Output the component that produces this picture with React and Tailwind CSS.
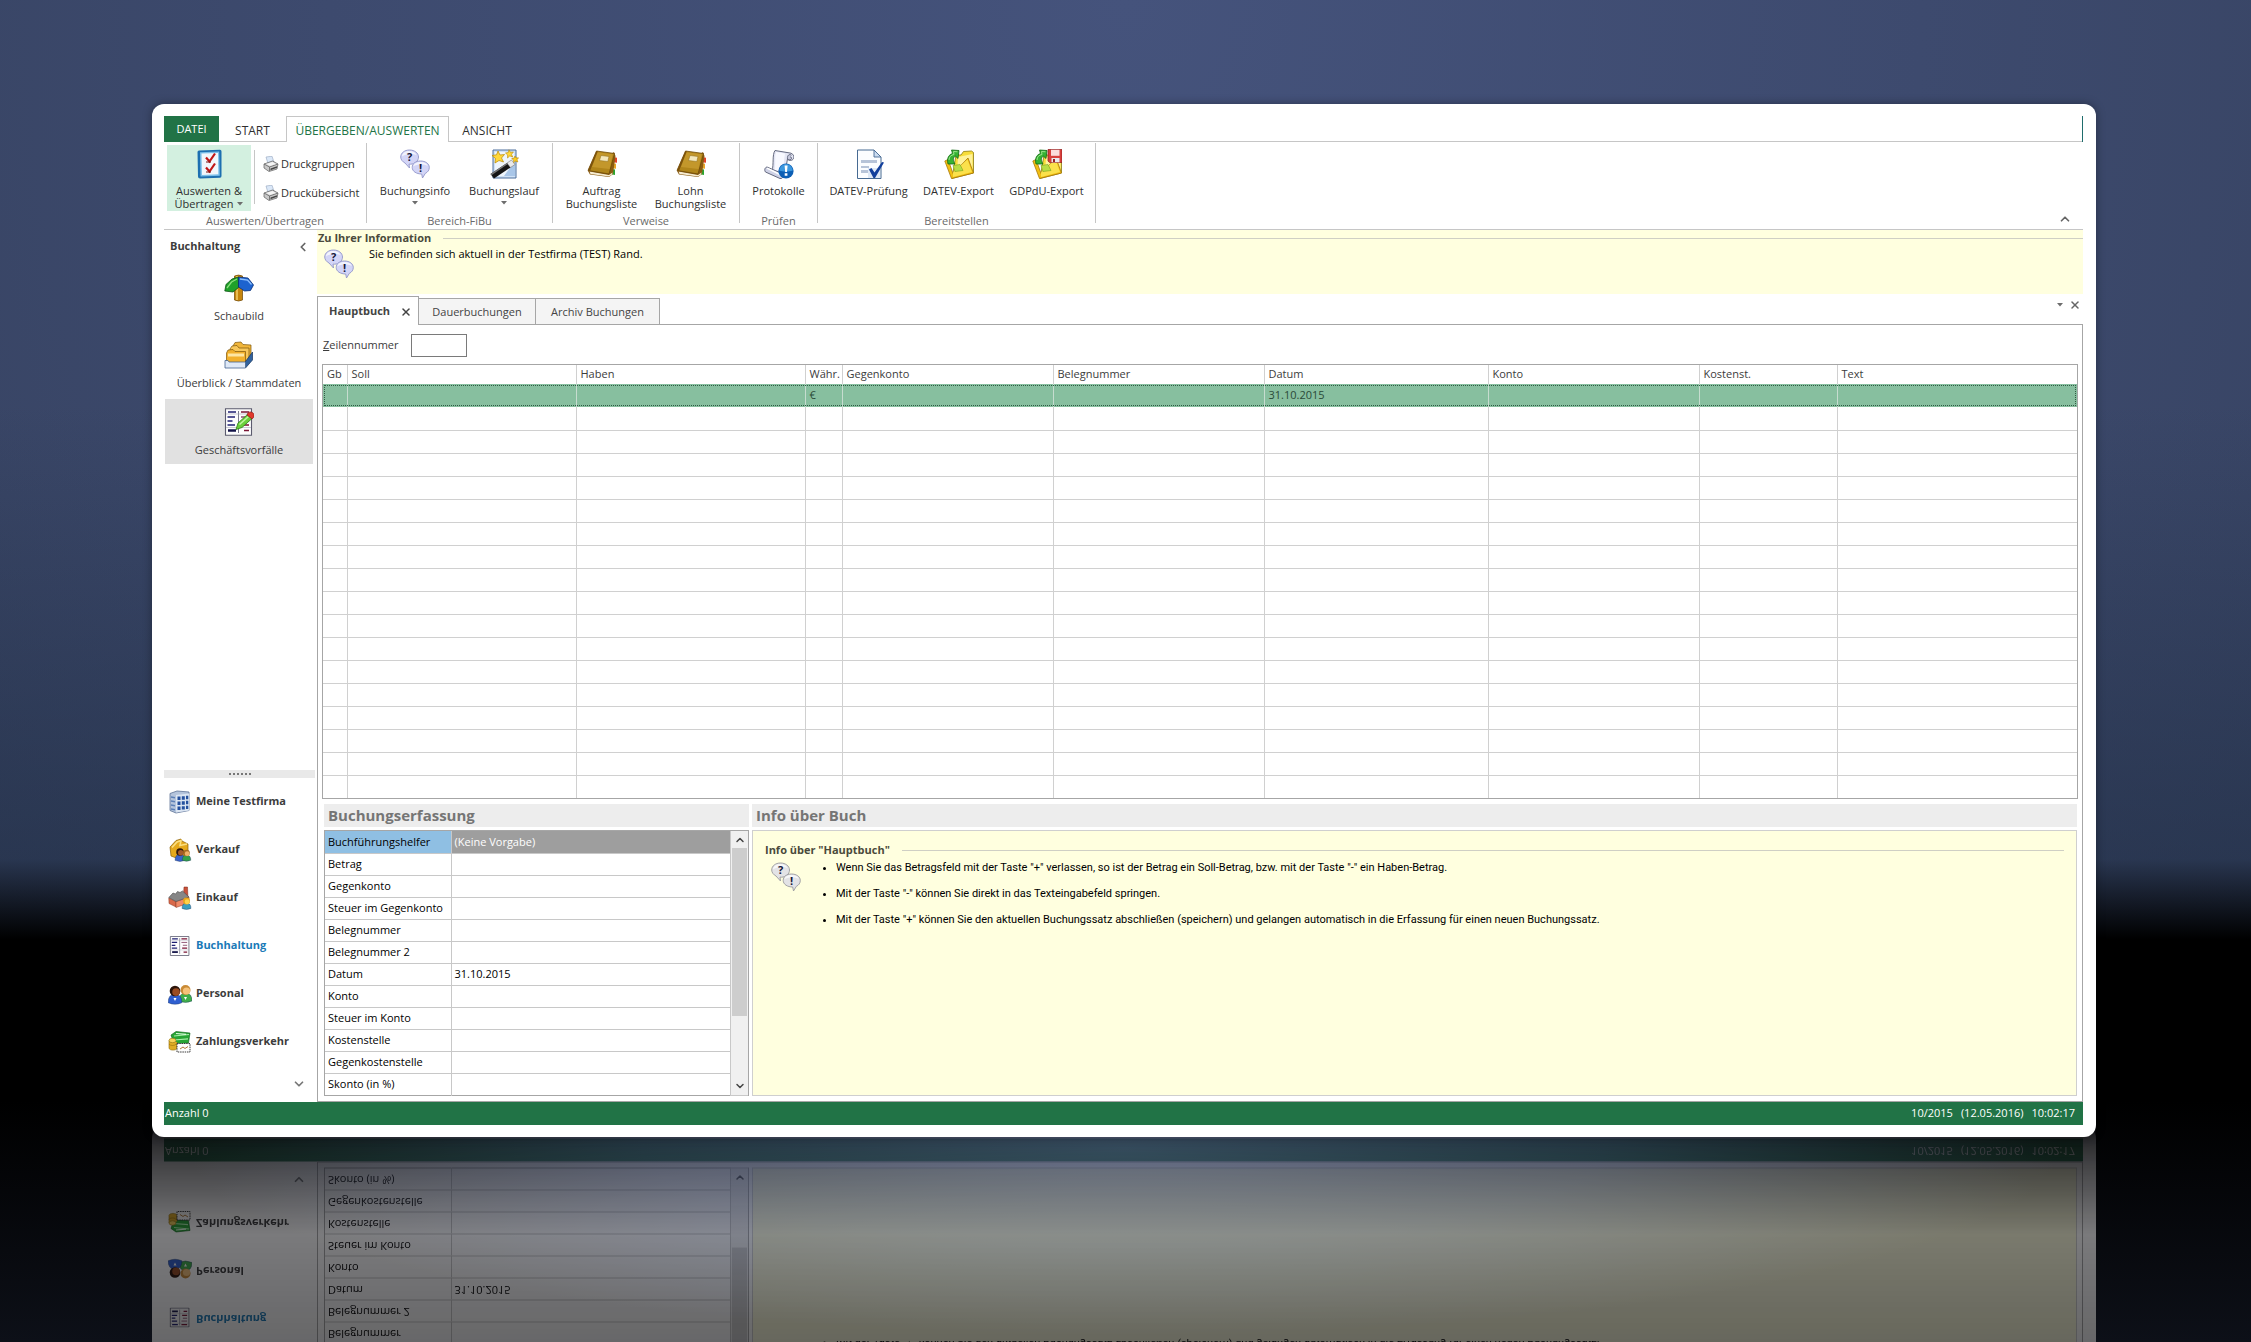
import { useId } from 'react';
import { ChevronDown, ChevronLeft, ChevronUp, X } from 'lucide-react';

/* ---------- Icons ---------- */

function ChecklistIcon() {
  return (
    <svg viewBox="0 0 30 30" className="size-[30px]" aria-hidden="true">
      <path d="M5 1.500 26 .8Q27.500 .8 27.500 2.500V27q0 1.500-1.500 1.700L6 29.500q-2 0-2-2L3.500 3Q3.500 1.500 5 1.500Z" fill="#1d6fb0" />
      <path d="M6 3.200 25.200 2.500 25.800 26.800 6.500 27.600Z" fill="#7cc0ea" />
      <path d="M7.500 4.600 24 4 24.300 25.300 8 26Z" fill="#f1f6fb" />
      <path d="M12 8.500l3.500 4L21 4.500M12 18.500l3.500 4L21 14.500" fill="none" stroke="#c01818" strokeWidth="2.200" />
      <path d="M12 13h5M12 23h5" stroke="#7d1414" strokeWidth="1" />
    </svg>
  );
}

function PrinterIcon() {
  return (
    <svg viewBox="0 0 16 16" className="size-4" aria-hidden="true">
      <path d="M3 1l6-.8 2 6-6 1.500Z" fill="#dbe8f8" stroke="#93a4bd" strokeWidth=".6" />
      <path d="M1 8 9.500 5l5.500 3-1 5-8 2.500L1 12Z" fill="#c9c9c9" stroke="#5d5d5d" strokeWidth=".7" />
      <path d="M1 8l5.500 3L15 8M6.500 11v4" fill="none" stroke="#666" strokeWidth=".8" />
      <path d="M7.500 12.500 14 10.200v1.500l-6.500 2.500Z" fill="#444" />
      <path d="M3 8 9.500 6l3.500 2-6 2Z" fill="#f5f5f5" />
    </svg>
  );
}

function InfoBubblesIcon({ gray }) {
  const fill = gray ? '#e3e3e6' : '#d3d5f7';
  const edge = gray ? '#9a9a9e' : '#9296c9';
  return (
    <svg viewBox="0 0 30 30" className="size-[30px]" aria-hidden="true">
      <path d="M9.500 1C14.500 1 18.500 4 18.500 8s-3.500 7-8 7.200L9 15.100 9.500 19 5 14C2.500 12.700.7 10.500.7 8 .7 4 4.500 1 9.500 1Z" fill={fill} stroke={edge} strokeWidth=".9" />
      <path d="M9.500 2C5.500 2 2 4 2 7.500 5 5 12 4 16.500 6 15.500 3.500 12.500 2 9.500 2Z" fill="#fff" opacity=".7" />
      <path d="M20.500 12c5 0 8.800 2.700 8.800 6.500 0 2.600-1.500 4.700-4 5.900L22.500 29l-.8-4c-5.300 0-9.500-2.700-9.500-6.500S15.500 12 20.500 12Z" fill={fill} stroke={edge} strokeWidth=".9" />
      <path d="M20.500 13c-4 0-7 1.600-7.200 4.500 4-2.500 10-2.500 14.500-.5C27 14.500 24 13 20.500 13Z" fill="#fff" opacity=".7" />
      <text x="9.500" y="12" textAnchor="middle" className="font-['Open_Sans',sans-serif] text-[11px] font-bold" fill="#17173a">?</text>
      <text x="20.500" y="23" textAnchor="middle" className="font-['Open_Sans',sans-serif] text-[11px] font-bold" fill="#17173a">!</text>
    </svg>
  );
}

function WandIcon() {
  return (
    <svg viewBox="0 0 30 30" className="size-[30px]" aria-hidden="true">
      <path d="M4 1h23v28H4Z" fill="#cfe1f5" stroke="#4d6e9c" />
      <path d="M6 3h19v24H6Z" fill="#eef5fc" />
      <path d="M15 27h11V12Z" fill="#a9c6e8" />
      <path d="M1.500 25 18 14l3.500 4.500L5 29.500Z" fill="#151515" />
      <path d="M18 14l4.500-3 3.500 4.500-4.500 3Z" fill="#e9e9e9" stroke="#666" strokeWidth=".5" />
      <path d="M1.500 25 18 14l.8 1L2.500 26.300Z" fill="#777" />
      <path d="M9 2l2 4 4.500-.5L12.500 9l2 4-4.500-1.500L6 14l.5-4.500L3 6.500l4.500-.7Z" fill="#ffd83a" stroke="#b98700" strokeWidth=".7" />
      <path d="M20 .8l1.400 2.500 3-.3-1.900 2.300 1.200 2.700-2.900-1.100L18.500 9l.2-3L16.500 4l2.800-.5Z" fill="#ffd83a" stroke="#b98700" strokeWidth=".6" />
      <path d="M26 7l1 2 2.500-.2-1.500 2 .9 2.200-2.400-.9-1.900 1.500.1-2.500-2-1.500 2.400-.5Z" fill="#ffcf20" stroke="#b98700" strokeWidth=".6" />
    </svg>
  );
}

function BookIcon() {
  return (
    <svg viewBox="0 0 30 30" className="size-[30px]" aria-hidden="true">
      <path d="M26 8l4 .8v5l-4-.5Z" fill="#e0442a" />
      <path d="M25 14l4 .8v5l-4-.5Z" fill="#e8a62a" />
      <path d="M24 20l4 .5V26l-4-.8Z" fill="#2ba52f" />
      <path d="M1 22 3 25.500 22 28l4-3L28.500 7 27 3Z" fill="#8a5c12" />
      <path d="M2.500 22.500 22 26l3.500-2.500-.4 2L22 27.500 3.500 25Z" fill="#f6ecd2" />
      <path d="M9.500 2 27.500 4.500 22 25 1 21.500Z" fill="#b0851a" stroke="#6e4a09" strokeWidth=".8" />
      <path d="M10.500 3.200 25.800 5.300 22.500 20 5 18Z" fill="#c89b30" opacity=".8" />
      <path d="M14 6.500l8 1-1.200 5-8.300-1Z" fill="#f3e7bd" stroke="#8a6a1a" strokeWidth=".5" />
      <path d="M1 21.500 9.500 2l1.300.2L3 22Z" fill="#7c520b" />
    </svg>
  );
}

function ScrollAlertIcon() {
  return (
    <svg viewBox="0 0 30 30" className="size-[30px]" aria-hidden="true">
      <path d="M11 1.500 26 4c3 .5 4.500 3 3.500 5.500s-5 2.500-6 .3L21 24 8 22.500C10 15 8 6 11 1.500Z" fill="#e4e6f4" stroke="#555a72" strokeWidth=".9" />
      <path d="M12 3l9 1.500c-1 5-1 12-2.500 17L10.500 21C12 14 10.500 8 12 3Z" fill="#f8f9ff" />
      <path d="M27.500 6.200c-2-1.500-4.500 0-4 3.500.8 1.500 3.500 1.500 4 0 .4-1-.5-2-1.500-1.700" fill="#c6c8dc" stroke="#555a72" strokeWidth=".9" />
      <path d="M3 18c-2 .3-3 3-1.500 5L16 29.500c3 .5 4-3 2-5Z" fill="#cfd2e6" stroke="#555a72" strokeWidth=".9" />
      <path d="M3 19.200 16 25.500" stroke="#fff" strokeWidth="1.500" />
      <circle cx="22" cy="22" r="7.600" fill="#0d5fb5" />
      <path d="M22 15a7 7 0 0 1 6.800 6.500c-4 1.500-9.600 1.500-13.600 0A7 7 0 0 1 22 15Z" fill="#3b97de" />
      <path d="M20.600 16.500h3l-.6 6.500h-1.800ZM20.700 24.300h2.700v2.500h-2.700Z" fill="#fff" />
    </svg>
  );
}

function DocCheckIcon() {
  return (
    <svg viewBox="0 0 30 30" className="size-[30px]" aria-hidden="true">
      <path d="M3.500 1H20l7 7v21.500H3.500Z" fill="#fbfdff" stroke="#476a92" />
      <path d="M20 1v7h7Z" fill="#cbdcf0" stroke="#476a92" strokeWidth=".9" />
      <path d="M7 11h16v3H7ZM7 17h8v2H7ZM7 21h7v3H7Z" fill="#b7c4d8" />
      <path d="M14 19h12v10H14Z" fill="#dfe9f6" />
      <path d="M15 20.500l2.500-1.500 3 4.500L28 13l2 .5L21 29h-1.500Z" fill="#123f9c" />
    </svg>
  );
}

function FolderExportIcon({ disk }) {
  return (
    <svg viewBox="0 0 30 30" className="size-[30px]" aria-hidden="true">
      <path d="M12 6h5l2.500-3.500 8-.5 2 1.500V24L8 29.500Z" fill="#f7dc3a" stroke="#8a7a12" strokeWidth=".8" />
      <path d="M14 8 28.500 5V22L13 26Z" fill="#fff29a" />
      <path d="M.8 12 4 10.500l5 14L24 9l5.500 15L7.500 29.500Z" fill="#f3bf12" stroke="#a8780a" strokeWidth=".8" />
      <path d="M9 23.500 23.500 10.500 28 23 9 28Z" fill="#fbe14c" />
      <path d="M9 16.500l7-1 3 6-8 1Z" fill="#b9dd45" stroke="#7aa51c" strokeWidth=".6" />
      <path d="M4 15C2.500 9 5 5.500 8.500 4.500L7.500 1 15 1.500l-1 8-2.500-2.300C8.500 8.500 9 11.500 11 15Z" fill="#35b232" stroke="#126912" strokeWidth=".8" />
      <path d="M5 11c0-3 2-5 5-5.500L9.500 2.500l4 .3" fill="none" stroke="#9be58a" strokeWidth="1" />
      {disk && (
        <g>
          <path d="M16 .5h14v13H17.500L16 12Z" fill="#d8403c" stroke="#8d1b1b" strokeWidth=".7" />
          <path d="M19 .8h8.500v6H19Z" fill="#fbdcda" />
          <path d="M19.500 9h8v4.300h-8Z" fill="#e9e9ee" />
          <path d="M21 10h2v3h-2Z" fill="#922" />
        </g>
      )}
    </svg>
  );
}

function SignpostIcon() {
  return (
    <svg viewBox="0 0 30 28" className="h-[28px] w-[30px]" aria-hidden="true">
      <path d="M10.500 2q4-1.800 8 0v24q-4 2-8 0Z" fill="#c5850e" stroke="#6e4605" strokeWidth=".7" />
      <path d="M13 2v24" stroke="#f3cf6a" strokeWidth="1.500" />
      <path d="M14.500 3v10.500L9 18 .8 17 2 10.500 8 5Z" fill="#1fa12a" stroke="#0b5411" strokeWidth=".8" />
      <path d="M13 5 7.500 8 3 14" fill="none" stroke="#8be07d" strokeWidth="1.300" />
      <path d="M14.500 3 24 4l5.500 7-3 5.500-6 .5-6-4Z" fill="#1d63cf" stroke="#0a2e75" strokeWidth=".8" />
      <path d="M16 5l7.500 1 4 4.500" fill="none" stroke="#8fc1ff" strokeWidth="1.300" />
    </svg>
  );
}

function FolderBoxIcon() {
  return (
    <svg viewBox="0 0 30 28" className="h-[28px] w-[30px]" aria-hidden="true">
      <path d="M9 5l2-3.500 6-.5 2 2.500 8 .5v15H9Z" fill="#f0b53a" stroke="#7d5408" strokeWidth=".7" />
      <path d="M6 8l2-3 5-.5 2 2.500h10v13H6Z" fill="#f7c75a" stroke="#7d5408" strokeWidth=".7" />
      <path d="M2.500 12l1.500-3 5-.5 2 2h10.500v11h-19Z" fill="#f2b02c" stroke="#7d5408" strokeWidth=".7" />
      <path d="M4 12.500h16v3H4Z" fill="#fde6a4" />
      <path d="M21.500 20.500 28.500 11v8l-7 8Z" fill="#31629e" stroke="#16345d" strokeWidth=".7" />
      <path d="M1 19.500h3l1 1.500h16.500v6H1Z" fill="#dfe9f7" stroke="#44638f" strokeWidth=".8" />
    </svg>
  );
}

function LedgerIcon({ pencil, className }) {
  return (
    <svg viewBox="0 0 30 28" className={className} aria-hidden="true">
      <path d="M1.500.7h26v26.600h-26Z" fill="#fdfdfd" stroke="#5b5b6e" strokeWidth="1.100" />
      <path d="M14.500 3v22" stroke="#7b7b8c" />
      <path d="M4 4h8M3.500 9h7.500M3.500 13h5M3.500 17h7.500" stroke="#1f1f72" strokeWidth="1.700" />
      <path d="M17 4h8M18 17h7M20 22.500h5" stroke="#7b1535" strokeWidth="1.700" />
      <path d="M17 9h8M19 13h6" stroke="#8d5070" strokeWidth="1.300" />
      <path d="M4 22.500h8" stroke="#131348" strokeWidth="2.500" />
      <path d="M2 6h25M2 19.500h25" stroke="#a9a9b8" strokeWidth=".6" />
      {pencil && (
        <g>
          <path d="M12 21.500 14 15 23.500 6.500l4.500 4L18 19.500Z" fill="#6bd13c" stroke="#2e7d14" strokeWidth=".8" />
          <path d="M15.500 16.500 24.500 8.500" stroke="#c4f5a2" strokeWidth="1.500" />
          <path d="M23 7c.5-3 4-4 6-2s1 4.500-1 6Z" fill="#e0392c" stroke="#8d1712" strokeWidth=".7" />
        </g>
      )}
    </svg>
  );
}

function BuildingIcon() {
  return (
    <svg viewBox="0 0 24 24" className="size-6" aria-hidden="true">
      <path d="M2 3.500 9 1l12 1v18.500L8 23 2 20.500Z" fill="#b4c4dc" stroke="#5d7296" strokeWidth=".8" />
      <path d="M8 5l13-1.500v17L8 22.500Z" fill="#dbe5f2" />
      <path d="M9.500 6.500h3v3.500h-3ZM13.800 6.200h3v3.500h-3ZM18 5.800h2.300v3.500H18ZM9.500 11.500h3V15h-3ZM13.800 11.200h3v3.500h-3ZM18 10.800h2.300v3.500H18ZM9.500 16.500h3V20h-3ZM13.800 16.200h3v3.300h-3ZM18 15.800h2.300V19H18Z" fill="#24509e" />
      <path d="M3 7l4 .7M3 11l4 .7M3 15l4 .7M3 19l4 .7" stroke="#5c80b7" strokeWidth="1.400" />
    </svg>
  );
}

/* Head and shoulders, shared by several of the module icons */
function Person({ x, y, hair, skin, shirt, r }) {
  return (
    <g>
      <path d={`M${x - r * 1.3} ${y + r * 2.2}q0-${r * 1.6} ${r * 1.3}-${r * 1.6}t${r * 1.3} ${r * 1.6}q-${r * 1.3} ${r * 0.6}-${r * 2.6} 0Z`} fill={shirt} stroke="#1c3560" strokeWidth=".4" />
      <circle cx={x} cy={y} r={r} fill={hair} />
      <circle cx={x + r * 0.2} cy={y + r * 0.2} r={r * 0.72} fill={skin} />
    </g>
  );
}

function SalesIcon() {
  return (
    <svg viewBox="0 0 24 24" className="size-6" aria-hidden="true">
      <path d="M2 9 8 2.500 13 1l1 2 6 3v12l-9 3-8-3Z" fill="#e5a91d" stroke="#8a5f06" strokeWidth=".7" />
      <path d="M4 9.500 9 4l4-1.500-1 5 7-1.500" fill="none" stroke="#fbdf82" strokeWidth="1.600" />
      <Person x={12} y={14} r={3.800} hair="#30180c" skin="#a55a2a" shirt="#3a63c9" />
      <Person x={18.500} y={15} r={3.300} hair="#a86a20" skin="#f0b267" shirt="#35a04a" />
    </svg>
  );
}

function PurchaseIcon() {
  return (
    <svg viewBox="0 0 24 24" className="size-6" aria-hidden="true">
      <path d="M15.500 9 16 1h3.500l.5 12Z" fill="#c9523a" stroke="#7c2716" strokeWidth=".5" />
      <path d="M.8 12 8 15.500V21L1 17.500Z" fill="#d8694a" stroke="#8a3420" strokeWidth=".5" />
      <path d="M8 15.500 21 11v6L8 21.500Z" fill="#f08a68" stroke="#8a3420" strokeWidth=".5" />
      <path d="M.8 11.500 5 7l2.500 1 2-2.500 2.500 1L14.500 5 21 11 8 15.500Z" fill="#868686" stroke="#4c4c4c" strokeWidth=".6" />
      <Person x={18.500} y={15} r={3.400} hair="#e8a51a" skin="#ffd34a" shirt="#3b9fc0" />
    </svg>
  );
}

function StaffIcon() {
  return (
    <svg viewBox="0 0 24 24" className="size-6" aria-hidden="true">
      <Person x={17.500} y={8} r={5} hair="#c98a35" skin="#f6c27a" shirt="#3fae4a" />
      <Person x={7} y={9} r={5.300} hair="#2c150a" skin="#9a4c22" shirt="#2f5fd0" />
      <path d="M5.500 16l1.500 3L8.500 16ZM16 15l1.500 3 1.500-3Z" fill="#fff" />
    </svg>
  );
}

function PaymentIcon() {
  return (
    <svg viewBox="0 0 24 24" className="size-6" aria-hidden="true">
      <path d="M3 5 8 1.500 22 3l-1.500 10L6 14Z" fill="#27a534" stroke="#0c5c15" strokeWidth=".6" />
      <path d="M6 6l15-1.500M6 10l14-1.200" stroke="#a8efaa" strokeWidth="1.200" />
      <path d="M8 3.500l10 .8" stroke="#dffbe0" strokeWidth="1.200" />
      <path d="M1 10.500v7.500c0 2.800 8 2.800 8 0v-6" fill="#e0ac25" stroke="#94700b" strokeWidth=".6" />
      <ellipse cx="4.500" cy="10.500" rx="3.500" ry="2.200" fill="#f7d35a" stroke="#94700b" strokeWidth=".6" />
      <path d="M1 14c1 2 6 2 7 0" fill="none" stroke="#94700b" strokeWidth=".6" />
      <path d="M9 13.500h13v8.500H9Z" fill="#fdfdfd" stroke="#3a3a3a" strokeDasharray="1.500 .8" />
      <path d="M12 19l3-2 2 1.500 3-2" fill="none" stroke="#b07a3a" />
    </svg>
  );
}

function Caret() {
  return (
    <svg viewBox="0 0 6 4" className="h-1 w-1.5" aria-hidden="true">
      <path d="M0 0h6L3 3.500Z" fill="#6d6d6d" />
    </svg>
  );
}

/* ---------- Data ---------- */

const columns = [
  { name: 'Gb', width: 'w-[24px]' },
  { name: 'Soll', width: 'w-[229px]' },
  { name: 'Haben', width: 'w-[229px]' },
  { name: 'Währ.', width: 'w-[37px]' },
  { name: 'Gegenkonto', width: 'w-[211px]' },
  { name: 'Belegnummer', width: 'w-[211px]' },
  { name: 'Datum', width: 'w-[224px]' },
  { name: 'Konto', width: 'w-[211px]' },
  { name: 'Kostenst.', width: 'w-[138px]' },
  { name: 'Text', width: '' },
];

const firstRow = { 'Währ.': '€', Datum: '31.10.2015' };

const entryFields = [
  ['Buchführungshelfer', '(Keine Vorgabe)'],
  ['Betrag', ''],
  ['Gegenkonto', ''],
  ['Steuer im Gegenkonto', ''],
  ['Belegnummer', ''],
  ['Belegnummer 2', ''],
  ['Datum', '31.10.2015'],
  ['Konto', ''],
  ['Steuer im Konto', ''],
  ['Kostenstelle', ''],
  ['Gegenkostenstelle', ''],
  ['Skonto (in %)', ''],
];

const modules = [
  { name: 'Meine Testfirma', icon: <BuildingIcon /> },
  { name: 'Verkauf', icon: <SalesIcon /> },
  { name: 'Einkauf', icon: <PurchaseIcon /> },
  { name: 'Buchhaltung', icon: <LedgerIcon className="h-5 w-6" />, active: true },
  { name: 'Personal', icon: <StaffIcon /> },
  { name: 'Zahlungsverkehr', icon: <PaymentIcon /> },
];

const hints = [
  'Wenn Sie das Betragsfeld mit der Taste "+" verlassen, so ist der Betrag ein Soll-Betrag, bzw. mit der Taste "-" ein Haben-Betrag.',
  'Mit der Taste "-" können Sie direkt in das Texteingabefeld springen.',
  'Mit der Taste "+" können Sie den aktuellen Buchungssatz abschließen (speichern) und gelangen automatisch in die Erfassung für einen neuen Buchungssatz.',
];

/* ---------- Ribbon ---------- */

function RibbonGroup({ title, className, children }) {
  return (
    <div className={`flex h-20 flex-col border-r border-[#c6c6c6] ${className}`}>
      <div className="flex h-[70px] shrink-0 justify-center pt-0.5">{children}</div>
      <div className="text-center leading-4 text-[#6a6a6a]">{title}</div>
    </div>
  );
}

function RibbonButton({ icon, lines, caret, inlineCaret, className = 'w-[89px]' }) {
  return (
    <button className={`flex h-[66px] flex-col items-center pt-1 leading-[13px] ${className}`}>
      <span className="mb-[5px]">{icon}</span>
      {lines.map((line, i) => (
        <span key={line} className="flex items-center gap-1 whitespace-nowrap">
          {line}
          {inlineCaret && i === lines.length - 1 && <Caret />}
        </span>
      ))}
      {caret && <span className="mt-1"><Caret /></span>}
    </button>
  );
}

function SmallButton({ label }) {
  return (
    <button className="flex items-center gap-0.5 whitespace-nowrap leading-4">
      <PrinterIcon />
      {label}
    </button>
  );
}

function Ribbon() {
  return (
    <header>
      <div className="flex h-[26px] items-stretch border-r border-[#1f6d6d] text-[12px]">
        <button className="w-[55px] bg-[#217346] text-[11px] text-white">DATEI</button>
        <button className="w-[67px] border-b border-[#c6c6c6] pt-1">START</button>
        <button className="w-[163px] border border-b-0 border-[#c6c6c6] pt-[3px] text-[#217346]">ÜBERGEBEN/AUSWERTEN</button>
        <div className="flex flex-1 border-b border-[#c6c6c6]">
          <button className="w-[76px] pt-1">ANSICHT</button>
        </div>
      </div>
      <div className="flex h-[88px] items-start border-b border-[#c6c6c6] pt-px">
        <RibbonGroup title="Auswerten/Übertragen" className="w-[203px]">
          <div className="flex flex-1 pl-[3px]">
            <RibbonButton
              icon={<ChecklistIcon />}
              lines={['Auswerten &', 'Übertragen']}
              inlineCaret
              className="w-[84px] bg-[#d3f0e0]"
            />
            <div className="mt-[5px] ml-[3px] h-[54px] border-l border-[#c6c6c6]" />
            <div className="ml-2 flex flex-col gap-[13px] pt-[11px]">
              <SmallButton label="Druckgruppen" />
              <SmallButton label="Druckübersicht" />
            </div>
          </div>
        </RibbonGroup>
        <RibbonGroup title="Bereich-FiBu" className="w-[186px]">
          <RibbonButton icon={<InfoBubblesIcon />} lines={['Buchungsinfo']} caret />
          <RibbonButton icon={<WandIcon />} lines={['Buchungslauf']} caret />
        </RibbonGroup>
        <RibbonGroup title="Verweise" className="w-[187px]">
          <RibbonButton icon={<BookIcon />} lines={['Auftrag', 'Buchungsliste']} />
          <RibbonButton icon={<BookIcon />} lines={['Lohn', 'Buchungsliste']} />
        </RibbonGroup>
        <RibbonGroup title="Prüfen" className="w-[78px]">
          <RibbonButton icon={<ScrollAlertIcon />} lines={['Protokolle']} className="w-[72px]" />
        </RibbonGroup>
        <RibbonGroup title="Bereitstellen" className="w-[278px]">
          <RibbonButton icon={<DocCheckIcon />} lines={['DATEV-Prüfung']} className="w-[92px]" />
          <RibbonButton icon={<FolderExportIcon />} lines={['DATEV-Export']} className="w-[88px]" />
          <RibbonButton icon={<FolderExportIcon disk />} lines={['GDPdU-Export']} className="w-[88px]" />
        </RibbonGroup>
        <button aria-label="Menüband reduzieren" className="mr-[11px] ml-auto self-end pb-[3px]">
          <ChevronUp className="size-3.5 text-[#666]" strokeWidth={3} />
        </button>
      </div>
    </header>
  );
}

/* ---------- Sidebar ---------- */

function AreaButton({ icon, label, active }) {
  return (
    <button
      className={`mr-1 ml-px flex h-[65px] flex-col items-center gap-1 pt-[9px] leading-5 ${
        active ? 'bg-[#e1e1e1]' : ''
      }`}
    >
      {icon}
      {label}
    </button>
  );
}

function Sidebar() {
  return (
    <nav className="flex w-[153px] shrink-0 flex-col text-[#3c3c3c]">
      <div className="mb-0.5 flex h-[33px] items-center justify-between pr-[7px] pl-1.5 font-bold">
        Buchhaltung
        <button aria-label="Leiste einklappen">
          <ChevronLeft className="size-3.5 text-[#666]" strokeWidth={3} />
        </button>
      </div>
      <div className="flex flex-col gap-0.5">
        <AreaButton icon={<SignpostIcon />} label="Schaubild" />
        <AreaButton icon={<FolderBoxIcon />} label="Überblick / Stammdaten" />
        <AreaButton icon={<LedgerIcon pencil className="h-[28px] w-[30px]" />} label="Geschäftsvorfälle" active />
      </div>
      <div className="flex-1" />
      <div className="mr-0.5 flex h-2 items-center justify-center gap-0.5 bg-[#e9e9e9]">
        {[0, 1, 2, 3, 4, 5].map((dot) => (
          <span key={dot} className="size-0.5 bg-[#777]" />
        ))}
      </div>
      {modules.map((m) => (
        <button
          key={m.name}
          className={`flex h-12 items-center gap-1 pl-1 font-bold ${m.active ? 'text-[#1a7ab8]' : ''}`}
        >
          {m.icon}
          {m.name}
        </button>
      ))}
      <button aria-label="Weitere Bereiche" className="flex h-9 items-center justify-end pr-[11px]">
        <ChevronDown className="size-3.5 text-[#777]" strokeWidth={3} />
      </button>
    </nav>
  );
}

/* ---------- Main area ---------- */

function Notice() {
  return (
    <section className="h-[64px] bg-[#ffffdf]">
      <div className="flex h-4 items-center gap-3 pl-px">
        <h2 className="font-bold text-[#4a4a3c]">Zu Ihrer Information</h2>
        <div className="flex-1 border-t border-[#cfcfc4]" />
      </div>
      <div className="flex items-start gap-[15px] pl-[7px]">
        <span className="pt-[3px]"><InfoBubblesIcon /></span>
        <p className="leading-4 text-black">Sie befinden sich aktuell in der Testfirma (TEST) Rand.</p>
      </div>
    </section>
  );
}

function DocumentTabs() {
  return (
    <div className="flex h-[31px] items-end border-b border-[#a6a6a6] text-[#444]">
      <button className="-mb-px flex h-[29px] w-[102px] items-center gap-2.5 border border-b-0 border-[#a6a6a6] bg-white pt-px pl-[11px] font-bold">
        Hauptbuch
        <X className="size-3" strokeWidth={3} />
      </button>
      <button className="h-[26px] w-[117px] border-t border-r border-[#a6a6a6] bg-[#f4f4f4] pt-0.5">Dauerbuchungen</button>
      <button className="h-[26px] w-[124px] border-t border-r border-[#a6a6a6] bg-[#f4f4f4] pt-0.5">Archiv Buchungen</button>
      <div className="mb-[13px] ml-auto flex items-center gap-1.5 pr-0.5">
        <button aria-label="Tabliste"><Caret /></button>
        <button aria-label="Tab schließen"><X className="size-3 text-[#666]" strokeWidth={3} /></button>
      </div>
    </div>
  );
}

function Ledger() {
  return (
    <div className="mr-1 border border-[#a6a6a6]">
      <table className="w-full table-fixed border-collapse text-left">
        <thead>
          <tr className="h-[19px]">
            {columns.map((c) => (
              <th key={c.name} className={`border-r border-[#d0d0d0] pb-0.5 pl-1 leading-4 font-normal whitespace-nowrap last:border-r-0 ${c.width}`}>
                {c.name}
              </th>
            ))}
          </tr>
        </thead>
        <tbody>
          <tr className="h-[23px] bg-[#87bf9f] text-[#2a4a38] outline-1 -outline-offset-2 outline-[#2f5c44] outline-dotted">
            {columns.map((c) => (
              <td key={c.name} className="border-r border-[#c6dccf] pl-1 last:border-r-0">{firstRow[c.name]}</td>
            ))}
          </tr>
          {Array.from({ length: 17 }, (_, row) => (
            <tr key={row} className="h-[23px] border-b border-[#d0d0d0] last:border-b-0">
              {columns.map((c) => (
                <td key={c.name} className="border-r border-[#d0d0d0] last:border-r-0" />
              ))}
            </tr>
          ))}
        </tbody>
      </table>
    </div>
  );
}

function EntryForm() {
  return (
    <section className="w-[425px] shrink-0">
      <h2 className="mb-[3px] bg-[#ededed] pl-1 text-[15px] leading-[23px] font-bold text-[#757575]">Buchungserfassung</h2>
      <div className="flex border border-b-0 border-[#a6a6a6] text-black">
        <table className="flex-1 table-fixed border-collapse text-left">
          <tbody>
            {entryFields.map(([label, value], i) => (
              <tr key={label} className={`h-[22px] border-b border-[#c8c8c8] last:border-[#a6a6a6] ${i === 0 ? 'bg-[#9e9e9e] text-white' : ''}`}>
                <th
                  scope="row"
                  className={`w-[126px] border-r border-[#c8c8c8] pl-[3px] font-normal whitespace-nowrap ${
                    i === 0 ? 'bg-[#8fbfe3] text-black' : ''
                  }`}
                >
                  {label}
                </th>
                <td className="pl-[3px]">{value}</td>
              </tr>
            ))}
          </tbody>
        </table>
        <div className="flex w-[18px] flex-col items-center border-b border-l border-[#c8c8c8] bg-[#f0f0f0]">
          <button aria-label="Nach oben" className="flex h-[17px] items-center">
            <ChevronUp className="size-3 text-[#444]" strokeWidth={3} />
          </button>
          <div className="h-[168px] w-[15px] bg-[#cdcdcd]" />
          <button aria-label="Nach unten" className="mt-auto flex h-[17px] items-center">
            <ChevronDown className="size-3 text-[#444]" strokeWidth={3} />
          </button>
        </div>
      </div>
    </section>
  );
}

function BookInfo() {
  return (
    <section className="flex min-w-0 flex-1 flex-col">
      <h2 className="mb-[3px] bg-[#ededed] pl-1 text-[15px] leading-[23px] font-bold text-[#757575]">Info über Buch</h2>
      <div className="flex-1 border border-[#cfcfcf] bg-[#ffffdf] pt-[11px] pl-3">
        <div className="flex h-4 items-center gap-3 pr-3">
          <h3 className="font-bold text-[#4a4a3c]">Info über "Hauptbuch"</h3>
          <div className="flex-1 border-t border-[#cfcfc4]" />
        </div>
        <div className="flex items-start gap-[35px] pt-0.5 pl-1.5">
          <span className="pt-0.5"><InfoBubblesIcon gray /></span>
          <ul className="list-disc space-y-2.5 font-[Roboto,sans-serif] text-[11px] text-black">
            {hints.map((hint) => (
              <li key={hint} className="leading-4">{hint}</li>
            ))}
          </ul>
        </div>
      </div>
    </section>
  );
}

function Workspace() {
  const lineId = useId();
  return (
    <main className="flex min-w-0 flex-1 flex-col text-[#3c3c3c]">
      <Notice />
      <DocumentTabs />
      <div className="border border-t-0 border-[#a6a6a6] pb-[5px] pl-1">
        <div className="flex items-center pt-[9px] pb-[7px]">
          <label htmlFor={lineId} className="w-[89px] pl-px"><u>Z</u>eilennummer</label>
          <input id={lineId} type="text" className="h-[23px] w-14 border border-[#7a7a7a] bg-white px-1 outline-none" />
        </div>
        <Ledger />
        <div className="mt-[5px] mr-[5px] ml-0.5 flex gap-[3px]">
          <EntryForm />
          <BookInfo />
        </div>
      </div>
    </main>
  );
}

function AppWindow() {
  return (
    <div className="rounded-xl bg-white p-3 pr-[13px] font-['Open_Sans',sans-serif] text-[11px] text-[#2f2f2f]">
      <Ribbon />
      <div className="flex">
        <Sidebar />
        <Workspace />
      </div>
      <footer className="flex h-[23px] items-center bg-[#217346] px-px text-white">
        <span>Anzahl 0</span>
        <span className="ml-auto">10/2015</span>
        <span className="ml-2">(12.05.2016)</span>
        <span className="mr-[7px] ml-2">10:02:17</span>
      </footer>
    </div>
  );
}

export default function App() {
  return (
    <div className="flex h-screen flex-col overflow-hidden bg-[linear-gradient(to_bottom,transparent_0%,transparent_30%,rgb(24_38_58/0.45)_64%,#000_70%,#000_82%,#0d1018_100%),radial-gradient(ellipse_at_50%_0%,#45537c_0%,#3d4a6e_50%,#35415e_100%)] pt-[104px] pr-[155px] pl-[152px]">
      <div className="relative z-10 rounded-xl shadow-[0_0_10px_rgb(0_0_0/0.35)]">
        <AppWindow />
      </div>
      {/* floor reflection */}
      <div
        aria-hidden="true"
        inert
        className="-mt-2.5 min-h-0 flex-1 overflow-hidden bg-[radial-gradient(ellipse_at_50%_10%,#38425f_0%,#242b40_35%,#0a0a0d_68%)]"
      >
        <div className="h-full mask-[linear-gradient(to_bottom,rgb(0_0_0/0.08)_0%,rgb(0_0_0/0.24)_18%,rgb(0_0_0/0.46)_50%,rgb(0_0_0/0.38)_100%)]">
          <div className="-scale-y-100">
            <AppWindow />
          </div>
        </div>
      </div>
    </div>
  );
}
